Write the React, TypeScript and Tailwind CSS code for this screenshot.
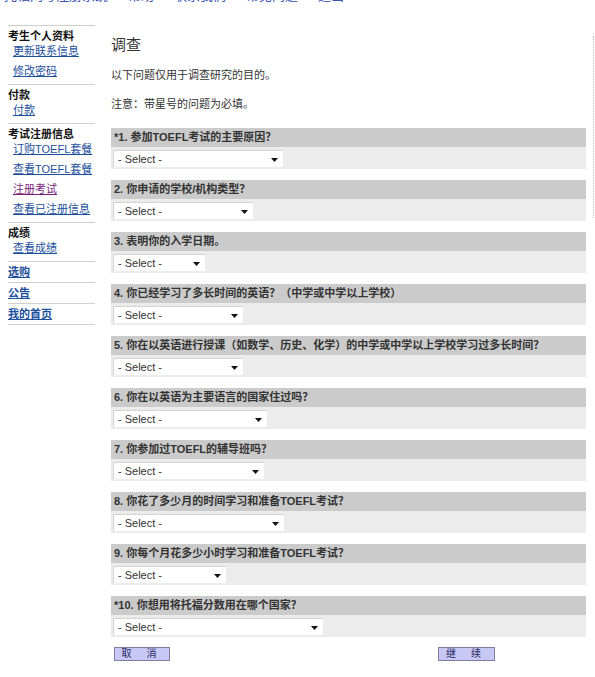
const sansCjk = 'font-["Liberation_Sans","Noto_Sans_CJK_SC",sans-serif]'

type Question = {
  label: string
  width: number
}

const questions: Question[] = [
  { label: '*1. 参加TOEFL考试的主要原因？', width: 170 },
  { label: '2. 你申请的学校/机构类型？', width: 140 },
  { label: '3. 表明你的入学日期。', width: 92 },
  { label: '4. 你已经学习了多长时间的英语？（中学或中学以上学校）', width: 130 },
  { label: '5. 你在以英语进行授课（如数学、历史、化学）的中学或中学以上学校学习过多长时间？', width: 130 },
  { label: '6. 你在以英语为主要语言的国家住过吗？', width: 154 },
  { label: '7. 你参加过TOEFL的辅导班吗？', width: 151 },
  { label: '8. 你花了多少月的时间学习和准备TOEFL考试？', width: 171 },
  { label: '9. 你每个月花多少小时学习和准备TOEFL考试？', width: 113 },
  { label: '*10. 你想用将托福分数用在哪个国家？', width: 210 },
]

type NavSection = {
  title?: string
  links: { text: string; visited?: boolean }[]
}

const navSections: NavSection[] = [
  { title: '考生个人资料', links: [{ text: '更新联系信息' }, { text: '修改密码' }] },
  { title: '付款', links: [{ text: '付款' }] },
  {
    title: '考试注册信息',
    links: [
      { text: '订购TOEFL套餐' },
      { text: '查看TOEFL套餐' },
      { text: '注册考试', visited: true },
      { text: '查看已注册信息' },
    ],
  },
  { title: '成绩', links: [{ text: '查看成绩' }] },
]

const topLinks = ['选购', '公告', '我的首页']

function FakeSelect({ width }: { width: number }) {
  return (
    <div
      className="flex h-[17px] items-center justify-between border-t border-l border-[#d4d4d4] bg-white pl-[4px] pr-[5px]"
      style={{ width }}
    >
      <span className="text-[11px] leading-none text-[#333]">- Select -</span>
      <svg width="7" height="4" viewBox="0 0 7 4" className="mt-[1px]">
        <path d="M0 0 L7 0 L3.5 4 Z" fill="#111" />
      </svg>
    </div>
  )
}

function Sidebar() {
  return (
    <div className="ml-[8px] w-[87px] pt-[22px] text-[11px]">
      {navSections.map((section) => (
        <div key={section.title} className="border-t border-[#d0d0d0] pb-[5px]">
          <div className="mt-[3px] h-[14px] leading-[14px] font-bold text-[#111]">{section.title}</div>
          <div className="flex flex-col gap-[4px]">
            {section.links.map((link) => (
              <a
                key={link.text}
                className={`ml-[5px] h-[16px] leading-[16px] underline ${link.visited ? 'text-[#7a1f7a]' : 'text-[#1d4f9c]'}`}
              >
                {link.text}
              </a>
            ))}
          </div>
        </div>
      ))}
      {topLinks.map((text) => (
        <div key={text} className="h-[21px] border-t border-[#d0d0d0] leading-[20px]">
          <a className="font-bold text-[#1d4f9c] underline">{text}</a>
        </div>
      ))}
      <div className="border-t border-[#d0d0d0]" />
    </div>
  )
}

export default function App() {
  return (
    <div className={`relative h-[677px] w-[595px] overflow-hidden bg-white ${sansCjk}`}>
      {/* top nav, scrolled mostly out of view */}
      <div className="h-[3px] overflow-hidden">
        <div className="-mt-[11px] ml-[4px] flex gap-[20px] text-[13px] leading-none text-[#3a54b8]">
          <span>托福网考注册系统</span>
          <span>帮助</span>
          <span>联系我们</span>
          <span>常见问题</span>
          <span>退出</span>
        </div>
      </div>
      <div className="flex">
        <Sidebar />
        <div className="ml-[16px] w-[475px] pt-[32px]">
          <h1 className="h-[20px] text-[15px] leading-[20px] text-[#333]">调查</h1>
          <p className="mt-[12px] h-[16px] text-[11px] leading-[16px] text-[#333]">以下问题仅用于调查研究的目的。</p>
          <p className="mt-[13px] h-[16px] text-[11px] leading-[16px] text-[#333]">注意：带星号的问题为必填。</p>
          <div className="mt-[16px] flex flex-col gap-[11px]">
            {questions.map((q) => (
              <div key={q.label}>
                <div className="h-[19px] truncate bg-[#cbcbcb] px-[3px] text-[11px] leading-[19px] font-bold text-[#333]">
                  {q.label}
                </div>
                <div className="h-[22px] bg-[#ececec] pt-[3px] pl-[2px]">
                  <FakeSelect width={q.width} />
                </div>
              </div>
            ))}
          </div>
          <div className="mt-[10px] flex">
            <button className="ml-[3px] h-[14px] w-[56px] border border-[#7d7da6] bg-[#c8c8f4] text-[10px] leading-[12px] tracking-[6px] text-[#2a2a66]">
              取 消
            </button>
            <button className="ml-[268px] h-[14px] w-[57px] border border-[#7d7da6] bg-[#c8c8f4] text-[10px] leading-[12px] tracking-[6px] text-[#2a2a66]">
              继 续
            </button>
          </div>
        </div>
        <div className="w-[8px]">
          <div className="mt-[33px] ml-[7px] h-[182px] border-l border-dotted border-[#bbb]" />
        </div>
      </div>
    </div>
  )
}
